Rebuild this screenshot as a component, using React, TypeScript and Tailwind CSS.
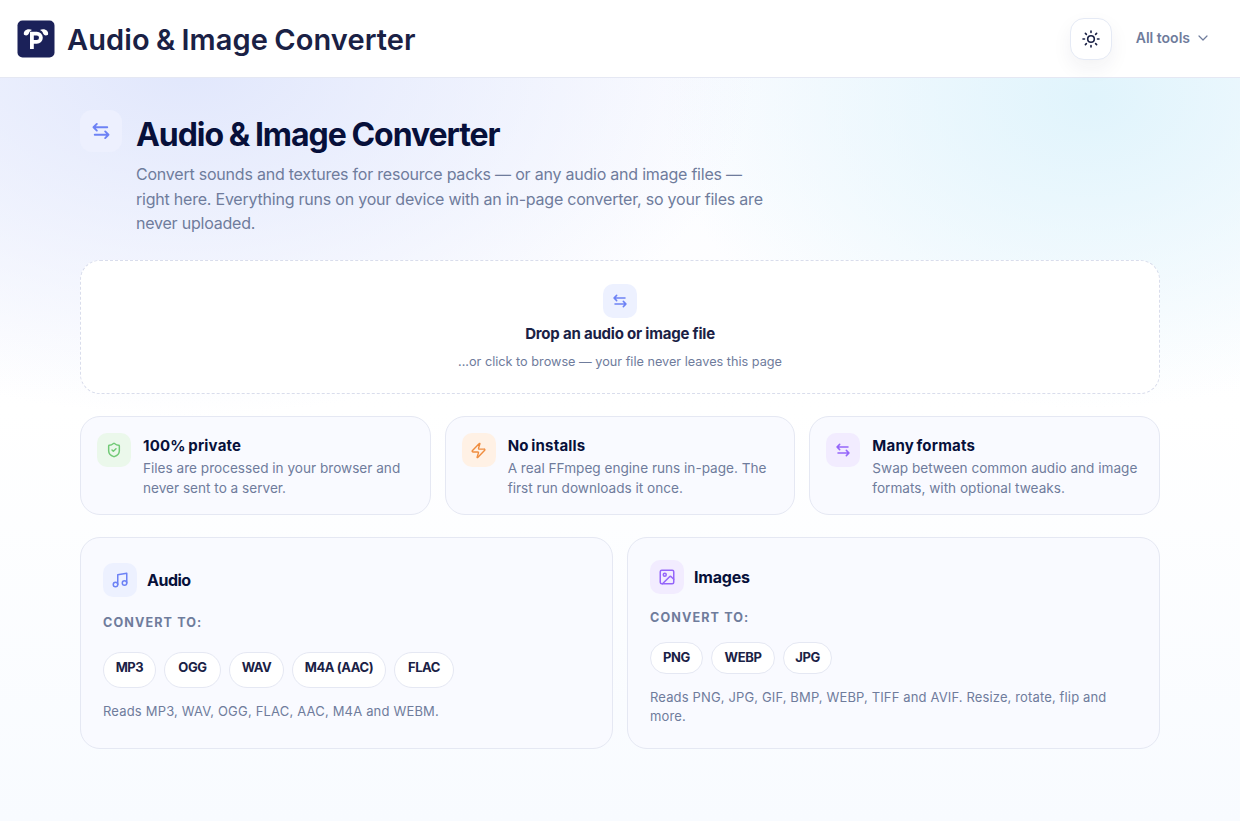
import React from 'react';
import { ChevronDown, Image, Music, ShieldCheck, Zap } from 'lucide-react';

const SwapIcon: React.FC<{ size: number }> = ({ size }) => (
  <svg width={size} height={size} viewBox="0 0 24 24" fill="none" stroke="currentColor" strokeWidth="2.3" strokeLinecap="round" strokeLinejoin="round">
    <path d="M19.500 7.500H3M7 3.500l-4 4 4 4" />
    <path d="M4.500 16.500H21M17 12.500l4 4-4 4" />
  </svg>
);

const SunIcon: React.FC = () => (
  <svg width="18" height="18" viewBox="0 0 18 18" fill="none" stroke="currentColor" strokeWidth="1.6" strokeLinecap="round">
    <circle cx="9" cy="9" r="3.300" />
    <path d="M9 1v1.500M9 15.500V17M1 9h1.500M15.500 9H17M3.400 3.400l1 1M13.600 13.600l1 1M3.400 14.600l1-1M13.600 4.400l1-1" />
  </svg>
);

const Logo: React.FC = () => (
  <svg className="h-[38px] w-[38px] shrink-0" viewBox="0 0 38 38">
    <rect x="0.5" y="0.5" width="37" height="37" rx="5" fill="#1b2159" />
    <path d="M7 14.800C6.200 11.500 8.500 9.200 12 9.200c1.300 0 2.300.3 3 .8-2 .7-2.600 2-3 3.300-.6 1.700-2.500 2.900-5 1.500z" fill="#fff" />
    <path d="M31 14.800c.8-3.300-1.500-5.600-5-5.600-1.300 0-2.300.3-3 .8 2 .7 2.600 2 3 3.300.6 1.700 2.500 2.900 5 1.500z" fill="#fff" />
    <path d="M14.900 29V13.700h4.900a3.800 3.800 0 0 1 0 8.200h-4.900" fill="none" stroke="#fff" strokeWidth="3.800" />
  </svg>
);

interface FeatureProps {
  title: string;
  text: string;
  tone: string;
  icon: React.ReactNode;
}

const Feature: React.FC<FeatureProps> = ({ title, text, tone, icon }) => (
  <div className="flex h-[99px] gap-3 rounded-[20px] border border-[#e5e8f3] bg-[#f9faff] p-4">
    <div className={`flex h-[34px] w-[34px] shrink-0 items-center justify-center rounded-[10px] ${tone}`}>{icon}</div>
    <div className="pt-0.5">
      <h3 className="text-[15px] leading-[21px] font-bold tracking-[0.200px] [word-spacing:-1.200px] whitespace-nowrap text-[#07103a]">{title}</h3>
      <p className="mt-0.5 text-[13.600px] leading-5 text-[#6f7c9c]">{text}</p>
    </div>
  </div>
);

const Chip: React.FC<{ children: React.ReactNode; className: string }> = ({ children, className }) => (
  <span className={`flex justify-center rounded-full border border-[#e5e8f3] bg-white pt-1 text-[13px] leading-5 font-bold tracking-[-0.4px] whitespace-nowrap text-[#1a2145] ${className}`}>
    {children}
  </span>
);

const App: React.FC = () => {
  return (
    <div className="flex h-[821px] w-full flex-col overflow-hidden bg-[radial-gradient(570px_350px_at_15%_8%,#e1e7fc_0%,transparent_100%),radial-gradient(430px_310px_at_88%_12%,#e0f4fc_0%,transparent_100%),linear-gradient(#fafbff,#ffffff_50%,#f8fbff)] font-['Inter',sans-serif]">
      <header className="flex h-[78px] shrink-0 items-center justify-between border-b border-[#e5e8f3] bg-white pr-[29px] pl-[17px]">
        <div className="flex items-center gap-3">
          <Logo />
          <span className="mt-0.5 text-[29px] leading-10 font-semibold tracking-[0.100px] [word-spacing:-1.200px] whitespace-nowrap text-[#1a2145]">Audio &amp; Image Converter</span>
        </div>
        <div className="flex items-center gap-6">
          <button className="flex h-[42px] w-[42px] items-center justify-center rounded-[14px] border border-[#e5eaf5] bg-white text-[#1a2145] shadow-[0_8px_20px_rgba(26,33,69,0.06)]">
            <SunIcon />
          </button>
          <button className="flex items-center gap-[5px] pb-0.5 text-sm font-semibold whitespace-nowrap text-[#6f7c9c]">
            All tools
            <ChevronDown size={16} strokeWidth={1.8} />
          </button>
        </div>
      </header>

      <main className="mx-auto w-[1080px] pt-8">
        <section className="flex h-[150px] gap-3.5">
          <div className="flex h-[42px] w-[42px] shrink-0 items-center justify-center rounded-xl bg-[#edf0fe] text-[#6d82f5]">
            <SwapIcon size={20} />
          </div>
          <div className="w-[640px] pt-1">
            <h1 className="text-[32px] leading-[42px] font-bold tracking-[-1.050px] [word-spacing:-0.800px] whitespace-nowrap text-[#07103a]">Audio &amp; Image Converter</h1>
            <p className="mt-1.5 text-base leading-[24.600px] tracking-[-0.220px] text-[#6f7c9c]">
              Convert sounds and textures for resource packs — or any audio and image files — right here. Everything runs on your device with an in-page converter, so your files are never uploaded.
            </p>
          </div>
        </section>

        <section className="flex h-[134px] flex-col items-center rounded-[20px] border border-dashed border-[#d9ddec] bg-white pt-[23px]">
          <div className="flex h-[34px] w-[34px] items-center justify-center rounded-[10px] bg-[#edf1ff] text-[#6d82f5]">
            <SwapIcon size={16} />
          </div>
          <div className="mt-1.5 text-[15px] leading-5 font-bold tracking-[-0.200px] whitespace-nowrap text-[#1a2145]">Drop an audio or image file</div>
          <div className="mt-2 text-[12.700px] leading-5 whitespace-nowrap text-[#6f7c9c]">...or click to browse — your file never leaves this page</div>
        </section>

        <section className="mt-[22px] grid grid-cols-3 gap-3.5">
          <Feature title="100% private" text="Files are processed in your browser and never sent to a server." tone="bg-[#ebf8eb] text-[#70c975]" icon={<ShieldCheck size={16} strokeWidth={2.2} />} />
          <Feature title="No installs" text="A real FFmpeg engine runs in-page. The first run downloads it once." tone="bg-[#fff1e5] text-[#ef8c3e]" icon={<Zap size={17} />} />
          <Feature title="Many formats" text="Swap between common audio and image formats, with optional tweaks." tone="bg-[#f2ecff] text-[#9566fa]" icon={<SwapIcon size={16} />} />
        </section>

        <section className="mt-[22px] grid grid-cols-2 gap-3.5">
          <div className="h-[212px] rounded-[20px] border border-[#e5e8f3] bg-[#f9faff] px-[22px] pt-[25px]">
            <div className="flex items-center gap-2.5">
              <div className="flex h-[34px] w-[34px] items-center justify-center rounded-[10px] bg-[#edf1ff] text-[#6d82f5]">
                <Music size={18} />
              </div>
              <h2 className="text-base font-bold tracking-[-0.500px] text-[#07103a]">Audio</h2>
            </div>
            <div className="mt-4 text-[12.600px] leading-5 font-bold tracking-[1.100px] text-[#6f7c9c]">CONVERT TO:</div>
            <div className="mt-[19px] flex gap-2">
              <Chip className="h-9 w-[53px]">MP3</Chip>
              <Chip className="h-9 w-[57px]">OGG</Chip>
              <Chip className="h-9 w-[55px]">WAV</Chip>
              <Chip className="h-9 w-[94px]">M4A (AAC)</Chip>
              <Chip className="h-9 w-[60px]">FLAC</Chip>
            </div>
            <p className="mt-3.5 text-[13px] leading-[19px] tracking-[0.180px] text-[#6f7c9c]">Reads MP3, WAV, OGG, FLAC, AAC, M4A and WEBM.</p>
          </div>

          <div className="h-[212px] rounded-[20px] border border-[#e5e8f3] bg-[#f9faff] px-[22px] pt-[22px]">
            <div className="flex items-center gap-2.5">
              <div className="flex h-[34px] w-[34px] items-center justify-center rounded-[10px] bg-[#f2ecff] text-[#9566fa]">
                <Image size={18} />
              </div>
              <h2 className="text-base font-bold tracking-[-0.200px] text-[#07103a]">Images</h2>
            </div>
            <div className="mt-3.5 text-[12.600px] leading-5 font-bold tracking-[1.100px] text-[#6f7c9c]">CONVERT TO:</div>
            <div className="mt-3.5 flex gap-2">
              <Chip className="h-8 w-[53px]">PNG</Chip>
              <Chip className="h-8 w-[64px]">WEBP</Chip>
              <Chip className="h-8 w-[49px]">JPG</Chip>
            </div>
            <p className="mt-3.5 text-[13px] leading-[19px] tracking-[0.140px] text-[#6f7c9c]">Reads PNG, JPG, GIF, BMP, WEBP, TIFF and AVIF. Resize, rotate, flip and more.</p>
          </div>
        </section>
      </main>
    </div>
  );
};

export default App;
